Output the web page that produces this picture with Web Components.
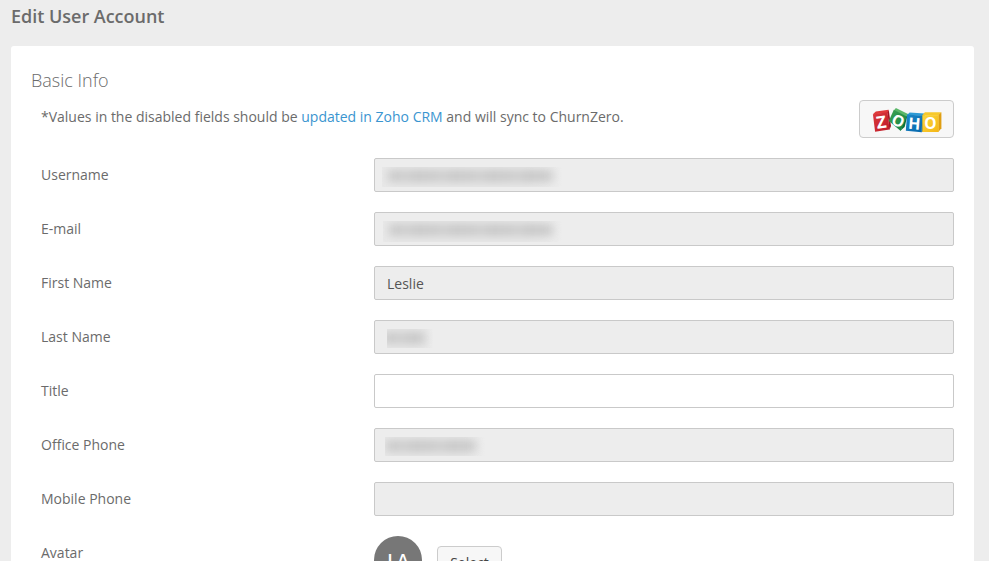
<!DOCTYPE html>
<html lang="en">
<head>
<meta charset="utf-8">
<title>Edit User Account</title>
<style>
    body {
        margin: 0;
        height: 561px;
        overflow: hidden;
        background: #ededed;
        color: #6b6b6b;
        font: 14px/20px "Open Sans", sans-serif;
    }
</style>
</head>
<body>
<account-page heading="Edit User Account">
    <info-panel heading="Basic Info">
        <sync-note slot="note">*Values in the disabled fields should be <text-link>updated in Zoho CRM</text-link> and will sync to ChurnZero.</sync-note>
        <form-row label="Username"><text-field disabled><hidden-value style="--left: 7px; --width: 180px; --text: 171px"></hidden-value></text-field></form-row>
        <form-row label="E-mail"><text-field disabled><hidden-value style="--left: 8px; --width: 179px; --text: 170px; --height: 21px"></hidden-value></text-field></form-row>
        <form-row label="First Name"><text-field disabled>Leslie</text-field></form-row>
        <form-row label="Last Name"><text-field disabled><hidden-value style="--left: 12px; --width: 46px; --text: 38px; --height: 19px; --start: -4px"></hidden-value></text-field></form-row>
        <form-row label="Title"><text-field></text-field></form-row>
        <form-row label="Office Phone"><text-field disabled><hidden-value style="--left: 10px; --width: 100px; --text: 91px; --height: 19px; --start: 1px"></hidden-value></text-field></form-row>
        <form-row label="Mobile Phone"><text-field disabled></text-field></form-row>
        <form-row label="Avatar"><avatar-picker initials="LA">Select</avatar-picker></form-row>
    </info-panel>
</account-page>

<script>
class BaseElement extends HTMLElement {
    constructor() {
        super();

        this.attachShadow({ mode: 'open' });
        this.shadowRoot.innerHTML = this.constructor.template;
    }

    _setText(selector, attribute) {
        this.shadowRoot.querySelector(selector).textContent = this.getAttribute(attribute);
    }
}

class AccountPage extends BaseElement {
    static template = `
        <style>
            :host {
                display: block;
                box-sizing: border-box;
                height: 561px;
                padding: 4px 15px 0 11px;
                overflow: hidden;
            }

            h1 {
                margin: 0 0 17px;
                font-size: 18px;
                line-height: 25px;
                font-weight: 600;
                letter-spacing: -0.02px;
            }
        </style>
        <h1></h1>
        <slot></slot>
    `;

    connectedCallback() {
        this._setText('h1', 'heading');
    }
}

class InfoPanel extends BaseElement {
    static template = `
        <style>
            :host {
                display: block;
                box-sizing: border-box;
                min-height: 515px;
                padding: 22px 20px 0;
                border-radius: 3px 3px 0 0;
                background: #fff;
            }

            h2 {
                margin: 0 0 7px;
                font-size: 18px;
                line-height: 25px;
                font-weight: 300;
            }

            .rows {
                display: grid;
                grid-auto-rows: 34px;
                row-gap: 20px;
                margin-top: 20px;
            }
        </style>
        <h2></h2>
        <slot name="note"></slot>
        <div class="rows"><slot></slot></div>
    `;

    connectedCallback() {
        this._setText('h2', 'heading');
    }
}

class SyncNote extends BaseElement {
    static template = `
        <style>
            :host {
                display: flex;
                justify-content: space-between;
                height: 38px;
                padding-left: 10px;
            }

            p {
                margin: 7px 0 0;
            }
        </style>
        <p><slot></slot></p>
        <zoho-button></zoho-button>
    `;
}

class TextLink extends BaseElement {
    static template = `
        <style>
            :host {
                display: inline;
                color: #3a95d0;
                cursor: pointer;
            }
        </style>
        <slot></slot>
    `;
}

class ZohoButton extends BaseElement {
    static template = `
        <style>
            :host {
                display: block;
            }

            button {
                display: block;
                width: 95px;
                height: 38px;
                padding: 8px 12px 4px;
                border: 1px solid #ccc;
                border-radius: 4px;
                background: #f7f7f7;
            }

            svg {
                display: block;
            }

            text {
                fill: #fff;
                font-family: "Open Sans", sans-serif;
                font-weight: 700;
                text-anchor: middle;
            }
        </style>
        <button aria-label="Zoho">
            <svg width="70" height="24" viewBox="0 0 70 24" overflow="visible">
                <defs>
                    <linearGradient id="red" x1="0" y1="0" x2="1" y2="1"><stop stop-color="#dc3a3c"/><stop offset="1" stop-color="#bd1a28"/></linearGradient>
                    <linearGradient id="green" x1="0" y1="0" x2="1" y2="1"><stop stop-color="#3fa352"/><stop offset="1" stop-color="#118043"/></linearGradient>
                    <linearGradient id="blue" x1="0" y1="0" x2="1" y2="1"><stop stop-color="#1c88c9"/><stop offset="1" stop-color="#0667ab"/></linearGradient>
                    <linearGradient id="yellow" x1="0" y1="0" x2="1" y2="1"><stop stop-color="#fbd63b"/><stop offset="1" stop-color="#f4b617"/></linearGradient>
                </defs>
                <path fill="#e0393a" d="M.9 5.3 3.8 2.6l12.8-1.8-.6 3.5z"/>
                <path fill="#9e1722" d="m15.5 3.8 1.2-3L19 16.9l-1.6 4z"/>
                <path fill="url(#red)" d="m.9 5.3 14.7-2 1.9 17.2-14.4 2.2z"/>
                <path fill="#0c7037" d="m34 7.4 2-2.7-3.4 13.2-4 3.7z"/>
                <path fill="#5bb768" d="M21.8 1.4 23.9-.9 36 4.9l-2 2.9z"/>
                <path fill="url(#green)" d="m21.8.8 12.9 6.6-6 14.6L16.8 12z"/>
                <path fill="#2e9bd5" d="m35 5.9 2.6-2.5 15 1.2-2.4 2.5z"/>
                <path fill="#075387" d="m49.8 6.7 2.9-2.1v17l-3.2 1.6z"/>
                <path fill="url(#blue)" d="m35 5.5 15.5 1.2-.9 16.5-15.8-1.5z"/>
                <path fill="#f7c92c" d="m50.3 6.2 2.6-3h16.5l-2.9 2.9z"/>
                <path fill="#df9e12" d="m66.3 6.1 3.1-2.9v16l-3.1 3.8z"/>
                <path fill="url(#yellow)" d="M50.3 6.1h16.3V23H50.3z"/>
                <text x="9.3" y="19.2" font-size="17" transform="rotate(-8 9.3 13)">Z</text>
                <text x="26.2" y="17.4" font-size="15.5" transform="rotate(25 26.2 12)">O</text>
                <text x="42.2" y="20.2" font-size="16" transform="rotate(5 42.2 15)">H</text>
                <text x="58.4" y="20.2" font-size="15.5">O</text>
            </svg>
        </button>
    `;
}

class FormRow extends BaseElement {
    static template = `
        <style>
            :host {
                display: grid;
                grid-template-columns: 333px 1fr;
                padding-left: 10px;
            }

            label {
                padding-top: 7px;
            }
        </style>
        <label></label>
        <slot></slot>
    `;

    connectedCallback() {
        this._setText('label', 'label');
    }
}

class TextField extends BaseElement {
    static template = `
        <style>
            :host {
                display: block;
                position: relative;
                box-sizing: border-box;
                height: 34px;
                padding: 7px 12px;
                border: 1px solid #c9c9c9;
                border-radius: 2px;
                background: #fff;
                color: #555;
            }

            :host([disabled]) {
                background: #ededed;
                cursor: not-allowed;
            }
        </style>
        <slot></slot>
    `;
}

/* smudge that stands over a private value */
class HiddenValue extends BaseElement {
    static template = `
        <style>
            :host {
                display: block;
                position: absolute;
                top: 8px;
                left: var(--left);
                width: var(--width);
                height: var(--height, 20px);
                overflow: hidden;
                background: linear-gradient(90deg, #e9e9e9 80%, #ededed);
            }

            i {
                position: absolute;
                top: 3px;
                left: var(--start, 6px);
                width: calc(var(--text) - var(--start, 6px));
                height: 12px;
                background: repeating-linear-gradient(97deg, #c8c8c8 0 13px, #cfcfcf 17px 20px, #c6c6c6 24px 37px);
                filter: blur(5px);
            }
        </style>
        <i></i>
    `;
}

class AvatarPicker extends BaseElement {
    static template = `
        <style>
            :host {
                display: flex;
                align-items: flex-start;
                gap: 15px;
            }

            .avatar {
                width: 48px;
                height: 48px;
                border-radius: 50%;
                background: #777;
                color: #fff;
                font-size: 18px;
                font-weight: 600;
                line-height: 48px;
                text-align: center;
            }

            button {
                width: 65px;
                height: 34px;
                margin-top: 10px;
                padding: 0;
                border: 1px solid #ccc;
                border-radius: 4px;
                background: #f7f7f7;
                color: #444;
                font: inherit;
            }
        </style>
        <div class="avatar"></div>
        <button><slot></slot></button>
    `;

    connectedCallback() {
        this._setText('.avatar', 'initials');
    }
}

customElements.define('account-page', AccountPage);
customElements.define('info-panel', InfoPanel);
customElements.define('sync-note', SyncNote);
customElements.define('text-link', TextLink);
customElements.define('zoho-button', ZohoButton);
customElements.define('form-row', FormRow);
customElements.define('text-field', TextField);
customElements.define('hidden-value', HiddenValue);
customElements.define('avatar-picker', AvatarPicker);
</script>
</body>
</html>
